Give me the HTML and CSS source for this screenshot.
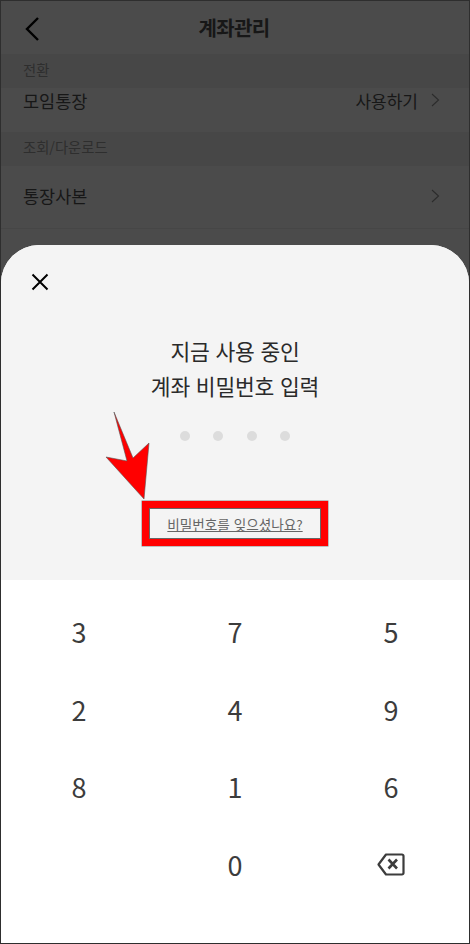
FILE: index.html
```html
<!DOCTYPE html>
<html lang="ko">
<head>
    <meta charset="UTF-8">
    <meta name="viewport" content="width=device-width, initial-scale=1.0">
    <title>계좌관리</title>
    <link rel="stylesheet" href="styles.css">
</head>
<body>
    <div class="screen">
        <div class="backdrop">
            <div class="top-bar">
                <svg class="back-icon" width="16" height="26" viewBox="0 0 16 26">
                    <path d="M14 2 L3 13 L14 24" fill="none" stroke="#000" stroke-width="2.4"/>
                </svg>
                <div class="top-title">계좌관리</div>
            </div>
            <div class="section-label">전환</div>
            <div class="row short">
                <span>모임통장</span>
                <div class="row-right">
                    <span>사용하기</span>
                    <svg class="chevron" width="9" height="14" viewBox="0 0 9 14"><path d="M1 1 L7.5 7 L1 13" fill="none" stroke="#2c2c2c" stroke-width="1.1"/></svg>
                </div>
            </div>
            <div class="section-label second">조회/다운로드</div>
            <div class="row tall">
                <span>통장사본</span>
                <svg class="chevron" width="9" height="14" viewBox="0 0 9 14"><path d="M1 1 L7.5 7 L1 13" fill="none" stroke="#2c2c2c" stroke-width="1.1"/></svg>
            </div>
        </div>

        <div class="sheet">
            <div class="sheet-top">
                <svg class="close-icon" width="18" height="18" viewBox="0 0 18 18">
                    <path d="M1.5 1.5 L16.5 16.5 M16.5 1.5 L1.5 16.5" fill="none" stroke="#000" stroke-width="2"/>
                </svg>
                <h1 class="prompt">지금 사용 중인<br>계좌 비밀번호 입력</h1>
                <div class="dots">
                    <i></i><i></i><i></i><i></i>
                </div>
                <div class="forgot-box"><a class="forgot">비밀번호를 잊으셨나요?</a></div>
            </div>
            <div class="keypad">
                <div class="key">3</div>
                <div class="key">7</div>
                <div class="key">5</div>
                <div class="key">2</div>
                <div class="key">4</div>
                <div class="key">9</div>
                <div class="key">8</div>
                <div class="key">1</div>
                <div class="key">6</div>
                <div class="key"></div>
                <div class="key">0</div>
                <div class="key">
                    <svg width="28" height="23" viewBox="0 0 28 23">
                        <path d="M9 1.5 H25 A1.5 1.5 0 0 1 26.5 3 V20 A1.5 1.5 0 0 1 25 21.5 H9 L1.5 11.5 Z" fill="none" stroke="#3c3c3c" stroke-width="2.2" stroke-linejoin="round"/>
                        <path d="M11.5 6.5 L20 15.5 M20 6.5 L11.5 15.5" fill="none" stroke="#3c3c3c" stroke-width="2.6"/>
                    </svg>
                </div>
            </div>
        </div>

        <svg class="arrow" width="50" height="92" viewBox="0 0 50 92">
            <polygon points="9,0 28,46 44,31 39,87 1,45 22,49" fill="#ff0000" stroke="#555" stroke-width="0.6"/>
        </svg>
    </div>
</body>
</html>
```

FILE: styles.css
```css
* {
    box-sizing: border-box;
}

html, body {
    margin: 0;
    padding: 0;
}

body {
    width: 470px;
    height: 944px;
    font-family: "Noto Sans CJK KR", "Noto Sans", sans-serif;
    overflow: hidden;
}

.screen {
    position: relative;
    width: 470px;
    height: 944px;
    border: 1px solid #2e2e2e;
    background-color: #4b4b4b;
    display: flex;
    flex-direction: column;
    overflow: hidden;
}

.backdrop {
    height: 244px;
    color: #1a1a1a;
}

.top-bar {
    height: 53px;
    display: flex;
    align-items: center;
    justify-content: center;
    position: relative;
}

.back-icon {
    position: absolute;
    left: 23px;
    top: 15px;
}

.top-title {
    font-size: 20px;
    font-weight: 700;
    letter-spacing: -0.6px;
    color: #171717;
    margin-left: -2px;
}

.section-label {
    height: 34px;
    padding: 7px 22px 0;
    background-color: #474747;
    color: #2e2e2e;
    font-size: 14.3px;
    line-height: 18px;
}

.section-label.second {
    padding-top: 6px;
}

.row {
    display: flex;
    align-items: center;
    justify-content: space-between;
    padding: 0 29px 0 22px;
    font-size: 17.5px;
    color: #171717;
}

.row.short {
    height: 44px;
    padding-bottom: 20px;
}

.row.tall {
    height: 63px;
    padding-bottom: 3px;
    border-bottom: 1px solid #464646;
}

.row-right {
    display: flex;
    align-items: center;
    gap: 13px;
    font-size: 17px;
}

.chevron {
    display: block;
}

.sheet {
    flex: 1;
    display: flex;
    flex-direction: column;
    background-color: #fff;
    border-radius: 38px 38px 0 0;
    overflow: hidden;
}

.sheet-top {
    height: 335px;
    background-color: #f4f4f4;
    display: flex;
    flex-direction: column;
    align-items: center;
    position: relative;
}

.close-icon {
    position: absolute;
    left: 30px;
    top: 28px;
}

.prompt {
    margin: 88px 0 0;
    font-size: 21.5px;
    font-weight: 400;
    line-height: 35px;
    text-align: center;
    color: #2a2a2a;
    letter-spacing: -0.2px;
}

.dots {
    display: flex;
    gap: 23.5px;
    margin-top: 28px;
}

.dots i {
    display: block;
    width: 10px;
    height: 10px;
    border-radius: 50%;
    background-color: #dcdcdc;
}

.forgot-box {
    margin-top: 60px;
    width: 186px;
    height: 45px;
    border: 8px solid #ff0000;
    outline: 1px solid #666;
    outline-offset: -8px;
    box-shadow: 0 0 0 0.5px #888;
    display: flex;
    align-items: center;
    justify-content: center;
}

.forgot {
    font-size: 13.6px;
    color: #666;
    text-decoration: underline;
}

.keypad {
    flex: 1;
    display: grid;
    grid-template-columns: repeat(3, 1fr);
    grid-auto-rows: 77.5px;
    padding-top: 13px;
}

.key {
    display: flex;
    align-items: center;
    justify-content: center;
    font-size: 27px;
    color: #3c3c3c;
}

.arrow {
    position: absolute;
    left: 104px;
    top: 411px;
}
```
